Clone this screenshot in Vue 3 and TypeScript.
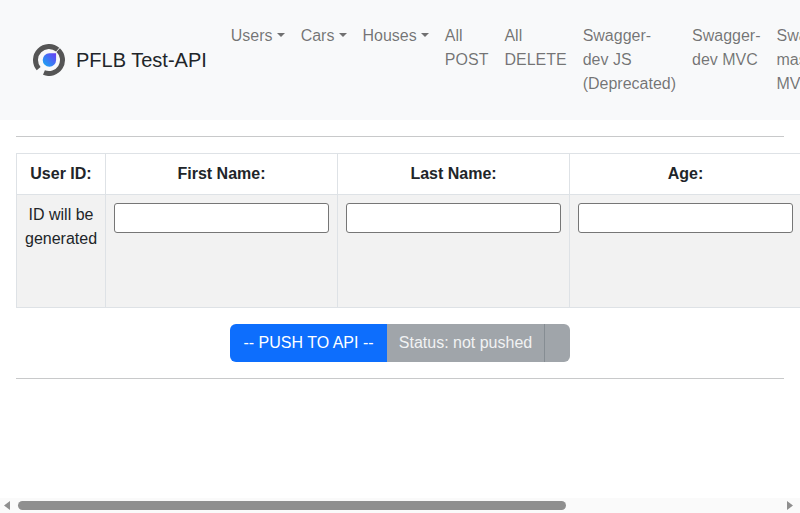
<script setup lang="ts">
type NavItem = { label: string; dropdown?: boolean }

const navItems: NavItem[] = [
  { label: 'Users', dropdown: true },
  { label: 'Cars', dropdown: true },
  { label: 'Houses', dropdown: true },
  { label: 'All POST' },
  { label: 'All DELETE' },
  { label: 'Swagger-dev JS (Deprecated)' },
  { label: 'Swagger-dev MVC' },
  { label: 'Swagger-master MVC' },
]

const columns = ['First Name:', 'Last Name:', 'Age:']
</script>

<template>
  <div class="page">
    <div class="viewport">
      <nav class="navbar">
        <a class="brand" href="#">
          <svg class="logo" width="32" height="32" viewBox="0 0 32 32" fill="none">
            <defs>
              <linearGradient id="drop" x1="0" y1="1" x2="1" y2="0">
                <stop offset="0" stop-color="#13aef2" />
                <stop offset="1" stop-color="#6a3df5" />
              </linearGradient>
            </defs>
            <path d="M5.66 24.68A13.5 13.5 0 0 1 24.68 5.66" stroke="#555555" stroke-width="5" />
            <path d="M25.2 6.13A13.5 13.5 0 0 1 10.94 28.52" stroke="#555555" stroke-width="5" />
            <path d="M16.4 9.3H23.1V16A6.7 6.7 0 1 1 16.4 9.3Z" fill="url(#drop)" />
          </svg>
          <span>PFLB Test-API</span>
        </a>
        <ul class="nav">
          <li v-for="item in navItems" :key="item.label">
            <a class="nav-link" :class="{ dropdown: item.dropdown }" href="#">{{ item.label }}</a>
          </li>
        </ul>
      </nav>

      <main class="content">
        <hr />
        <table class="add-table">
          <thead>
            <tr>
              <th class="id-col">User ID:</th>
              <th v-for="col in columns" :key="col">{{ col }}</th>
            </tr>
          </thead>
          <tbody>
            <tr>
              <td class="id-col">ID will be generated</td>
              <td v-for="col in columns" :key="col"><input type="text" /></td>
            </tr>
          </tbody>
        </table>

        <div class="actions">
          <div class="btn-group">
            <button class="btn primary">-- PUSH TO API --</button>
            <button class="btn muted status">Status: not pushed</button>
            <button class="btn muted extra"></button>
          </div>
        </div>
        <hr />
      </main>
    </div>

    <div class="scrollbar">
      <svg width="6" height="9" viewBox="0 0 6 9"><path d="M6 0v9L0 4.5Z" fill="#8f8f8f" /></svg>
      <div class="track"><div class="thumb"></div></div>
      <svg width="6" height="9" viewBox="0 0 6 9"><path d="M0 0v9l6-4.5Z" fill="#8f8f8f" /></svg>
    </div>
  </div>
</template>

<style>
html,
body {
  margin: 0;
  overflow: hidden;
}
</style>

<style scoped>
.page {
  width: 800px;
  height: 513px;
  display: flex;
  flex-direction: column;
  overflow: hidden;
  font-family: "Liberation Sans", Arial, sans-serif;
  font-size: 16px;
  line-height: 24px;
  color: #212529;
  background: #fff;
}

.viewport {
  flex: 1;
  min-height: 0;
  overflow: hidden;
}

.navbar {
  width: 1115px;
  box-sizing: border-box;
  display: flex;
  align-items: center;
  padding: 16px 32px 16px 33px;
  background: #f8f9fa;
}

.brand {
  display: flex;
  align-items: center;
  gap: 11px;
  margin-right: 16px;
  font-size: 20px;
  line-height: 30px;
  color: #212529;
  text-decoration: none;
  white-space: nowrap;
}

.nav {
  display: flex;
  align-items: flex-start;
  margin: 0;
  padding: 0;
  list-style: none;
}

.nav li {
  width: min-content;
}

.nav-link {
  display: block;
  padding: 8px;
  color: rgba(0, 0, 0, 0.55);
  text-decoration: none;
}

.nav-link.dropdown {
  white-space: nowrap;
}

.nav-link.dropdown::after {
  content: "";
  display: inline-block;
  margin-left: 0.255em;
  vertical-align: 0.255em;
  border-top: 0.3em solid;
  border-right: 0.3em solid transparent;
  border-left: 0.3em solid transparent;
}

.content {
  width: 800px;
  box-sizing: border-box;
  padding: 16px;
}

hr {
  margin: 0;
  border: 0;
  border-top: 1px solid #c8c9ca;
}

.add-table {
  margin: 16px 0;
  width: 785px;
  table-layout: fixed;
  border-collapse: collapse;
}

.add-table th,
.add-table td {
  width: 232px;
  box-sizing: border-box;
  padding: 8px;
  border: 1px solid #dee2e6;
  text-align: center;
  vertical-align: top;
}

.add-table .id-col {
  width: 89px;
}

.add-table th {
  font-weight: 700;
}

.add-table tbody tr {
  height: 113px;
  background: #f2f2f2;
}

.add-table input {
  display: block;
  width: 100%;
  height: 30px;
  box-sizing: border-box;
  border: 1px solid #767676;
  border-radius: 3px;
  background: #fff;
}

.actions {
  display: flex;
  justify-content: center;
  margin-bottom: 16px;
}

.btn-group {
  display: flex;
  height: 38px;
  border-radius: 6px;
  overflow: hidden;
}

.btn {
  height: 38px;
  padding: 0;
  border: 0;
  font: inherit;
  color: #fff;
}

.primary {
  width: 157px;
  background: #0d6efd;
}

.muted {
  background: #a0a5aa;
  color: #f1f2f3;
}

.status {
  width: 158px;
  border-right: 1px solid #868d93;
}

.extra {
  width: 25px;
}

.scrollbar {
  height: 15px;
  flex: none;
  display: flex;
  align-items: center;
  gap: 8px;
  padding: 0 7px 0 4px;
  background: #fafafa;
}

.track {
  flex: 1;
  height: 9px;
}

.thumb {
  width: 548px;
  height: 9px;
  border-radius: 5px;
  background: #8f8f8f;
}
</style>
